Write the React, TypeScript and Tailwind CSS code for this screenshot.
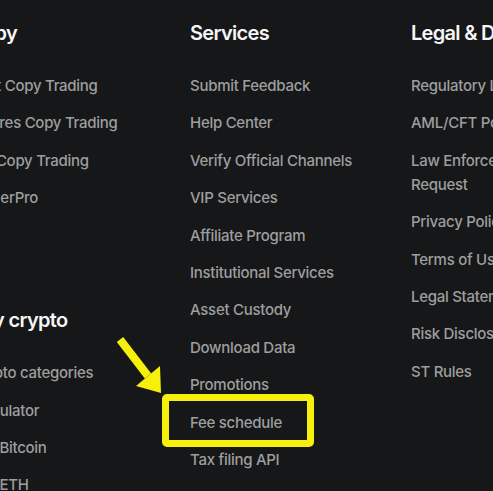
import React from "react";

type Section = { title: string; links: string[] };

const col1: Section[] = [
  { title: "Copy", links: ["Spot Copy Trading", "Futures Copy Trading", "Bot Copy Trading", "TraderPro"] },
  { title: "Buy crypto", links: ["Crypto categories", "Calculator", "Buy Bitcoin", "Buy ETH"] },
];

const services: Section = {
  title: "Services",
  links: [
    "Submit Feedback",
    "Help Center",
    "Verify Official Channels",
    "VIP Services",
    "Affiliate Program",
    "Institutional Services",
    "Asset Custody",
    "Download Data",
    "Promotions",
    "Fee schedule",
    "Tax filing API",
  ],
};

const legal: Section = {
  title: "Legal & Disclosures",
  links: [
    "Regulatory License",
    "AML/CFT Policy",
    "Law Enforcement Request",
    "Privacy Policy",
    "Terms of Use",
    "Legal Statement",
    "Risk Disclosure",
    "ST Rules",
  ],
};

function Block({ s }: { s: Section }) {
  return (
    <div className="flex flex-col">
      <h3 className="text-[20px] leading-[28px] font-semibold text-[#f6f6f6] whitespace-nowrap tracking-[-0.7px]">
        {s.title}
      </h3>
      <ul className="mt-[27px] flex flex-col gap-[13.4px]">
        {s.links.map((l) => (
          <li key={l} className="text-[15px] leading-[24px] font-medium text-[#9e9e9e] tracking-[-0.28px]">
            {l}
          </li>
        ))}
      </ul>
    </div>
  );
}

export default function App() {
  return (
    <div
      className="relative w-[493px] h-[491px] overflow-hidden bg-[#161718]"
      style={{ fontFamily: "Inter, 'Noto Sans', sans-serif" }}
    >
      <div className="flex pt-[19px] ml-[-31px]">
        <div className="w-[221px] shrink-0 flex flex-col gap-[96px]">
          {col1.map((s) => (
            <Block key={s.title} s={s} />
          ))}
        </div>
        <div className="w-[221px] shrink-0">
          <Block s={services} />
        </div>
        <div className="w-[165px] shrink-0">
          <Block s={legal} />
        </div>
      </div>

      {/* annotation box */}
      <div className="absolute left-[162px] top-[394px] w-[152px] h-[53px] border-[7px] border-[#f6f00c] rounded-[5px]" />

      {/* annotation arrow */}
      <svg className="absolute left-0 top-0" width="493" height="491" viewBox="0 0 493 491">
        <polygon points="123.2,337.1 116.8,341.9 144.8,378.4 151.2,373.6" fill="#f6f00c" />
        <polygon points="136,386 160,366 161,393" fill="#f6f00c" />
      </svg>
    </div>
  );
}
